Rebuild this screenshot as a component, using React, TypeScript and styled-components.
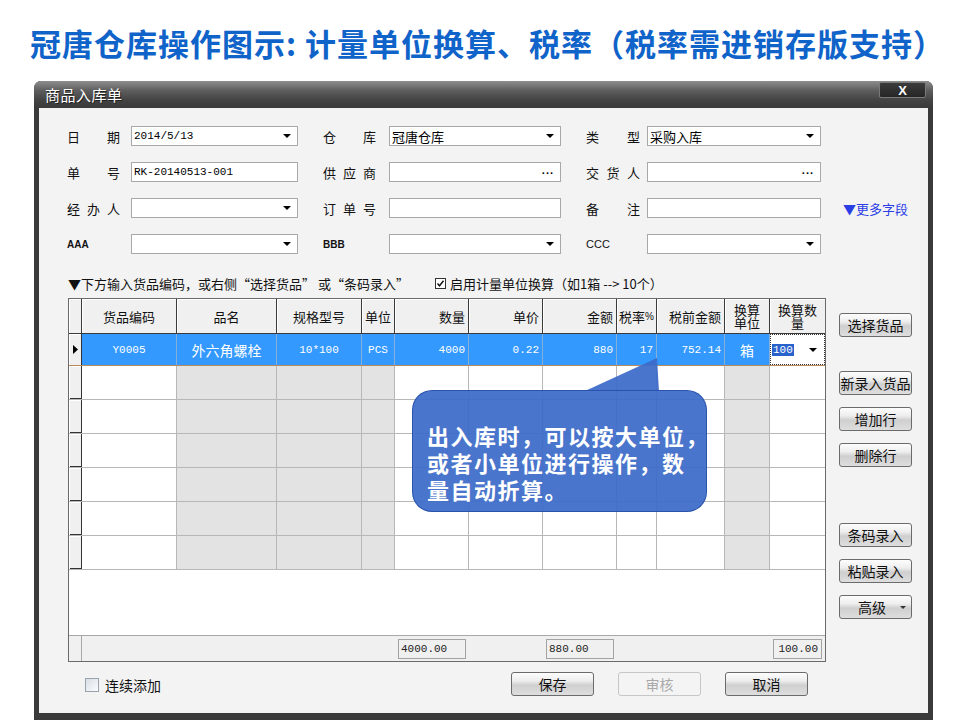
import React from 'react';
import styled, { createGlobalStyle } from 'styled-components';

const CJK = '"Noto Sans CJK SC", "Noto Sans", sans-serif';
const MONO = '"Liberation Mono", "Noto Sans CJK SC", monospace';
const COLS = '13px 95px 100px 85px 33px 74px 74px 74px 40px 68px 45px 55px';

const GlobalStyle = createGlobalStyle`
  html, body {
    margin: 0;
    padding: 0;
    background: #fff;
  }
  body {
    font-family: ${CJK};
  }
  *, *::before, *::after {
    box-sizing: border-box;
  }
`;

const Page = styled.div`
  width: 960px;
  height: 720px;
  overflow: hidden;
  background: #fff;
`;

const Heading = styled.h1`
  margin: 0;
  height: 81px;
  padding: 26px 0 0 30px;
  font-family: ${CJK};
  font-weight: 700;
  font-size: 31px;
  line-height: 34px;
  letter-spacing: 1px;
  color: #0f63c9;
  white-space: nowrap;
`;

const Window = styled.div`
  margin-left: 34px;
  width: 899px;
  height: 639px;
  padding: 0 5px 7px;
  background: #3a3a3a;
  border-radius: 7px 7px 0 0;
  display: flex;
  flex-direction: column;
`;

const TitleBar = styled.div`
  height: 27px;
  margin: 0 -5px;
  padding: 0 7px 0 11px;
  display: flex;
  justify-content: space-between;
  align-items: center;
  border-radius: 7px 7px 0 0;
  background: linear-gradient(#8e8e8e 0%, #5e5e5e 35%, #444 70%, #3a3a3a 100%);
`;

const WindowTitle = styled.span`
  color: #fff;
  font-size: 15px;
  text-shadow: 1px 1px 0 #222;
  letter-spacing: 0.5px;
`;

const CloseButton = styled.div`
  align-self: flex-start;
  margin-top: 1px;
  width: 47px;
  height: 16px;
  border: 1px solid #7a7a7a;
  border-radius: 2px;
  background: linear-gradient(#3c3c3c, #252525);
  color: #fff;
  font: bold 13px "Liberation Sans", sans-serif;
  display: flex;
  align-items: center;
  justify-content: center;
`;

const Body = styled.div`
  flex: 1;
  background: #f3f3f3;
  padding-top: 18px;
  display: flex;
  flex-direction: column;
`;

const Form = styled.div`
  padding-left: 28px;
  display: grid;
  grid-template-columns: 231px 238px 235px auto;
  grid-auto-rows: 20px;
  column-gap: 26px 25px;
  column-gap: 25px;
  row-gap: 16px;
`;

const Field = styled.div<{ $label: number; $gap: number }>`
  display: grid;
  grid-template-columns: ${({ $label }) => $label}px 1fr;
  column-gap: ${({ $gap }) => $gap}px;
  align-items: center;
`;

const LabelBox = styled.div`
  display: flex;
  justify-content: space-between;
  font-size: 13px;
  color: #111;
`;

const CodeLabel = styled.div<{ $plain?: boolean }>`
  font: ${({ $plain }) => ($plain ? '11px' : 'bold 10px')} "Liberation Sans", sans-serif;
  color: #111;
`;

const Input = styled.div`
  height: 20px;
  border: 1px solid #a8a8a8;
  background: #fff;
  display: flex;
  align-items: center;
  padding: 0 6px 0 2px;
`;

const InputText = styled.span<{ $cjk?: boolean }>`
  flex: 1;
  white-space: nowrap;
  font: ${({ $cjk }) => ($cjk ? `13px ${CJK}` : `11px ${MONO}`)};
  color: #000;
`;

const Caret = styled.span`
  width: 0;
  height: 0;
  border-left: 4px solid transparent;
  border-right: 4px solid transparent;
  border-top: 4px solid #000;
`;

const Dots = styled.span`
  font: bold 11px "Liberation Sans", sans-serif;
  letter-spacing: 1px;
  line-height: 1;
  margin-top: -3px;
`;

const MoreLink = styled.a`
  font-size: 13px;
  color: #2b3ee6;
  align-self: center;
  white-space: nowrap;
  margin-left: -3px;
`;

const HintRow = styled.div`
  margin-top: 21px;
  padding-left: 29px;
  height: 16px;
  display: flex;
  align-items: center;
  font-size: 13px;
  color: #111;
  white-space: nowrap;
`;

const HintText = styled.span`
  width: 367px;
`;

const CheckBox = styled.span<{ $size: number; $soft?: boolean }>`
  width: ${({ $size }) => $size}px;
  height: ${({ $size }) => $size}px;
  border: 1px solid ${({ $soft }) => ($soft ? '#9aa3ad' : '#333')};
  background: ${({ $soft }) => ($soft ? 'linear-gradient(135deg, #d8dee6, #fbfcfd)' : '#fff')};
  display: inline-flex;
  align-items: center;
  justify-content: center;
  margin-right: 4px;
`;

const MainArea = styled.div`
  margin-top: 7px;
  padding-left: 29px;
  display: flex;
  align-items: flex-start;
`;

const GridWrap = styled.div`
  position: relative;
  width: 758px;
  height: 364px;
  border: 1px solid #6a6a6a;
  background: #fff;
  display: flex;
  flex-direction: column;
`;

const Row = styled.div<{ $h: number; $line: string }>`
  display: grid;
  grid-template-columns: ${COLS};
  height: ${({ $h }) => $h}px;
  border-bottom: 1px solid ${({ $line }) => $line};
`;

const HeadCell = styled.div<{ $align?: string }>`
  display: flex;
  align-items: center;
  justify-content: ${({ $align }) => ($align === 'right' ? 'flex-end' : 'center')};
  padding: 0 ${({ $align }) => ($align === 'right' ? '3px' : '0')};
  background: #f0f0f0;
  border-right: 1px solid #3a3a3a;
  box-shadow: inset 1px 1px 0 #fff;
  font-size: 13px;
  line-height: 13px;
  text-align: center;
  white-space: nowrap;
  overflow: hidden;
  color: #111;
  &:last-child {
    border-right: none;
  }
`;

const Percent = styled.span`
  font: 10px "Liberation Sans", sans-serif;
`;

const Indicator = styled.div<{ $dark?: boolean }>`
  background: #f0f0f0;
  border-right: 1px solid #333;
  box-shadow: inset 1px 1px 0 #fff ${({ $dark }) => ($dark ? ', inset 0 -1px 0 #333' : '')};
  display: flex;
  align-items: center;
  justify-content: center;
`;

const Cell = styled.div<{ $align?: string; $shade?: boolean; $sel?: boolean }>`
  display: flex;
  align-items: center;
  justify-content: ${({ $align }) =>
    $align === 'right' ? 'flex-end' : $align === 'left' ? 'flex-start' : 'center'};
  padding: 0 3px;
  overflow: hidden;
  white-space: nowrap;
  border-right: 1px solid ${({ $sel }) => ($sel ? '#86aedb' : '#b7b7b7')};
  background: ${({ $sel, $shade }) => ($sel ? '#3399ff' : $shade ? '#e3e3e3' : '#fff')};
  color: ${({ $sel }) => ($sel ? '#fff' : '#000')};
  font: ${({ $sel }) => ($sel ? `11px ${MONO}` : 'inherit')};
  &:last-child {
    border-right: none;
  }
`;

const CellCjk = styled.span`
  font: 14px ${CJK};
`;

const EditCell = styled.div`
  background: #fff;
  border: 1px dotted #333;
  display: flex;
  align-items: center;
  justify-content: space-between;
  padding: 0 7px 0 1px;
`;

const Selected = styled.span`
  background: #2a62cc;
  color: #fff;
  font: 11px ${MONO};
  padding: 0 1px;
`;

const Blank = styled.div`
  flex: 1;
  background: #fff;
`;

const FooterRow = styled.div`
  display: grid;
  grid-template-columns: ${COLS};
  height: 26px;
  background: #f0f0f0;
  border-top: 1px solid #a8a8a8;
`;

const FooterCell = styled.div<{ $edge?: boolean }>`
  display: flex;
  align-items: center;
  border-right: ${({ $edge }) => ($edge ? '1px solid #a8a8a8' : 'none')};
`;

const SumBox = styled.div<{ $right?: boolean }>`
  margin: 0 3px;
  flex: 1;
  height: 20px;
  border: 1px solid #a3a3a3;
  display: flex;
  align-items: center;
  justify-content: ${({ $right }) => ($right ? 'flex-end' : 'flex-start')};
  padding: 0 3px 0 2px;
  font: 11px ${MONO};
  color: #222;
`;

const Callout = styled.div`
  position: absolute;
  left: 343px;
  top: 91px;
  width: 295px;
  height: 122px;
  border-radius: 20px;
  background: rgba(60, 106, 200, 0.93);
  border: 1px solid rgba(40, 80, 170, 0.9);
  padding: 31px 0 0 14px;
  color: #fff;
  font: bold 22px ${CJK};
  line-height: 27px;
  letter-spacing: 1.5px;
  white-space: nowrap;
`;

const CalloutTail = styled.svg`
  position: absolute;
  left: 516px;
  top: 59px;
  width: 75px;
  height: 33px;
`;

const SideButtons = styled.div`
  margin-left: 13px;
  padding-top: 15px;
  display: flex;
  flex-direction: column;
`;

const Button = styled.div<{ $w: number; $mt?: number; $disabled?: boolean }>`
  width: ${({ $w }) => $w}px;
  height: 24px;
  margin-top: ${({ $mt }) => $mt ?? 0}px;
  border: 1px solid ${({ $disabled }) => ($disabled ? '#c6c6c6' : '#6b6b6b')};
  border-radius: 3px;
  background: ${({ $disabled }) =>
    $disabled
      ? '#f4f4f4'
      : 'linear-gradient(#fdfdfd 0%, #eeeeee 35%, #cfcfcf 55%, #dedede 100%)'};
  color: ${({ $disabled }) => ($disabled ? '#a9a9a9' : '#111')};
  font-size: 14px;
  display: flex;
  align-items: center;
  justify-content: center;
  white-space: nowrap;
`;

const MenuButton = styled(Button)`
  justify-content: space-between;
  padding: 0 5px 0 18px;
`;

const SmallCaret = styled.span`
  width: 0;
  height: 0;
  border-left: 3px solid transparent;
  border-right: 3px solid transparent;
  border-top: 3px solid #333;
`;

const BottomBar = styled.div`
  height: 51px;
  padding-left: 46px;
  display: grid;
  grid-template-columns: 426px auto;
  align-items: start;
`;

const KeepAdding = styled.label`
  margin-top: 16px;
  display: flex;
  align-items: center;
  font-size: 14px;
  color: #111;
  height: 14px;
`;

const KeepText = styled.span`
  margin-left: 2px;
`;

const ActionButtons = styled.div`
  margin-top: 10px;
  display: flex;
  gap: 24px;
`;

function Label({ text }: { text: string }) {
  return (
    <LabelBox>
      {text.split('').map((c, i) => (
        <span key={i}>{c}</span>
      ))}
    </LabelBox>
  );
}

type InputProps = { value?: string; cjk?: boolean; kind?: 'select' | 'dots' | 'plain' };

function TextInput({ value = '', cjk, kind = 'plain' }: InputProps) {
  return (
    <Input>
      <InputText $cjk={cjk}>{value}</InputText>
      {kind === 'select' && <Caret />}
      {kind === 'dots' && <Dots>...</Dots>}
    </Input>
  );
}

const headers: { title: React.ReactNode; align?: string }[] = [
  { title: '货品编码' },
  { title: '品名' },
  { title: '规格型号' },
  { title: '单位' },
  { title: '数量', align: 'right' },
  { title: '单价', align: 'right' },
  { title: '金额', align: 'right' },
  { title: <>税率<Percent>%</Percent></> },
  { title: '税前金额', align: 'right' },
  { title: <>换算<br />单位</> },
  { title: <>换算数<br />量</> },
];

const shaded = [false, true, true, true, false, false, false, false, false, true, false];

export default function App() {
  return (
    <Page>
      <GlobalStyle />
      <Heading>冠唐仓库操作图示: 计量单位换算、税率（税率需进销存版支持）</Heading>
      <Window>
        <TitleBar>
          <WindowTitle>商品入库单</WindowTitle>
          <CloseButton>X</CloseButton>
        </TitleBar>
        <Body>
          <Form>
            <Field $label={53} $gap={11}>
              <Label text="日期" />
              <TextInput value="2014/5/13" kind="select" />
            </Field>
            <Field $label={53} $gap={13}>
              <Label text="仓库" />
              <TextInput value="冠唐仓库" cjk kind="select" />
            </Field>
            <Field $label={54} $gap={7}>
              <Label text="类型" />
              <TextInput value="采购入库" cjk kind="select" />
            </Field>
            <span />

            <Field $label={53} $gap={11}>
              <Label text="单号" />
              <TextInput value="RK-20140513-001" />
            </Field>
            <Field $label={53} $gap={13}>
              <Label text="供应商" />
              <TextInput kind="dots" />
            </Field>
            <Field $label={54} $gap={7}>
              <Label text="交货人" />
              <TextInput kind="dots" />
            </Field>
            <span />

            <Field $label={53} $gap={11}>
              <Label text="经办人" />
              <TextInput kind="select" />
            </Field>
            <Field $label={53} $gap={13}>
              <Label text="订单号" />
              <TextInput />
            </Field>
            <Field $label={54} $gap={7}>
              <Label text="备注" />
              <TextInput />
            </Field>
            <MoreLink>▼更多字段</MoreLink>

            <Field $label={53} $gap={11}>
              <CodeLabel>AAA</CodeLabel>
              <TextInput kind="select" />
            </Field>
            <Field $label={53} $gap={13}>
              <CodeLabel>BBB</CodeLabel>
              <TextInput kind="select" />
            </Field>
            <Field $label={54} $gap={7}>
              <CodeLabel $plain>CCC</CodeLabel>
              <TextInput kind="select" />
            </Field>
            <span />
          </Form>

          <HintRow>
            <HintText>▼下方输入货品编码，或右侧“选择货品” 或“条码录入”</HintText>
            <CheckBox $size={11}>
              <svg width="9" height="9" viewBox="0 0 9 9">
                <path d="M1.5 4.5 L3.5 6.8 L7.5 1.8" fill="none" stroke="#111" strokeWidth="1.4" />
              </svg>
            </CheckBox>
            启用计量单位换算（如1箱 --&gt; 10个）
          </HintRow>

          <MainArea>
            <GridWrap>
              <Row $h={35} $line="#3a3a3a">
                <HeadCell />
                {headers.map((h, i) => (
                  <HeadCell key={i} $align={h.align}>
                    {h.title}
                  </HeadCell>
                ))}
              </Row>

              <Row $h={32} $line="#b98a5a">
                <Indicator>
                  <svg width="5" height="9" viewBox="0 0 5 9">
                    <path d="M0 0 L5 4.5 L0 9 Z" fill="#000" />
                  </svg>
                </Indicator>
                <Cell $sel>Y0005</Cell>
                <Cell $sel>
                  <CellCjk>外六角螺栓</CellCjk>
                </Cell>
                <Cell $sel>10*100</Cell>
                <Cell $sel>PCS</Cell>
                <Cell $sel $align="right">4000</Cell>
                <Cell $sel $align="right">0.22</Cell>
                <Cell $sel $align="right">880</Cell>
                <Cell $sel $align="right">17</Cell>
                <Cell $sel $align="right">752.14</Cell>
                <Cell $sel>
                  <CellCjk>箱</CellCjk>
                </Cell>
                <EditCell>
                  <Selected>100</Selected>
                  <Caret />
                </EditCell>
              </Row>

              {Array.from({ length: 6 }).map((_, r) => (
                <Row key={r} $h={34} $line="#b7b7b7">
                  <Indicator $dark />
                  {shaded.map((s, i) => (
                    <Cell key={i} $shade={s} />
                  ))}
                </Row>
              ))}

              <Blank />

              <FooterRow>
                <FooterCell $edge />
                <FooterCell />
                <FooterCell />
                <FooterCell />
                <FooterCell />
                <FooterCell>
                  <SumBox>4000.00</SumBox>
                </FooterCell>
                <FooterCell />
                <FooterCell>
                  <SumBox>880.00</SumBox>
                </FooterCell>
                <FooterCell />
                <FooterCell />
                <FooterCell />
                <FooterCell>
                  <SumBox $right>100.00</SumBox>
                </FooterCell>
              </FooterRow>

              <CalloutTail viewBox="0 0 75 33">
                <path d="M0 33 L72 0 L74 33 Z" fill="rgba(60, 106, 200, 0.93)" />
              </CalloutTail>
              <Callout>
                出入库时，可以按大单位，
                <br />
                或者小单位进行操作，数
                <br />
                量自动折算。
              </Callout>
            </GridWrap>

            <SideButtons>
              <Button $w={73}>选择货品</Button>
              <Button $w={73} $mt={34}>新录入货品</Button>
              <Button $w={73} $mt={12}>增加行</Button>
              <Button $w={73} $mt={12}>删除行</Button>
              <Button $w={73} $mt={56}>条码录入</Button>
              <Button $w={73} $mt={12}>粘贴录入</Button>
              <MenuButton $w={73} $mt={12}>
                高级
                <SmallCaret />
              </MenuButton>
            </SideButtons>
          </MainArea>

          <BottomBar>
            <KeepAdding>
              <CheckBox $size={14} $soft />
              <KeepText>连续添加</KeepText>
            </KeepAdding>
            <ActionButtons>
              <Button $w={83}>保存</Button>
              <Button $w={83} $disabled>审核</Button>
              <Button $w={83}>取消</Button>
            </ActionButtons>
          </BottomBar>
        </Body>
      </Window>
    </Page>
  );
}
